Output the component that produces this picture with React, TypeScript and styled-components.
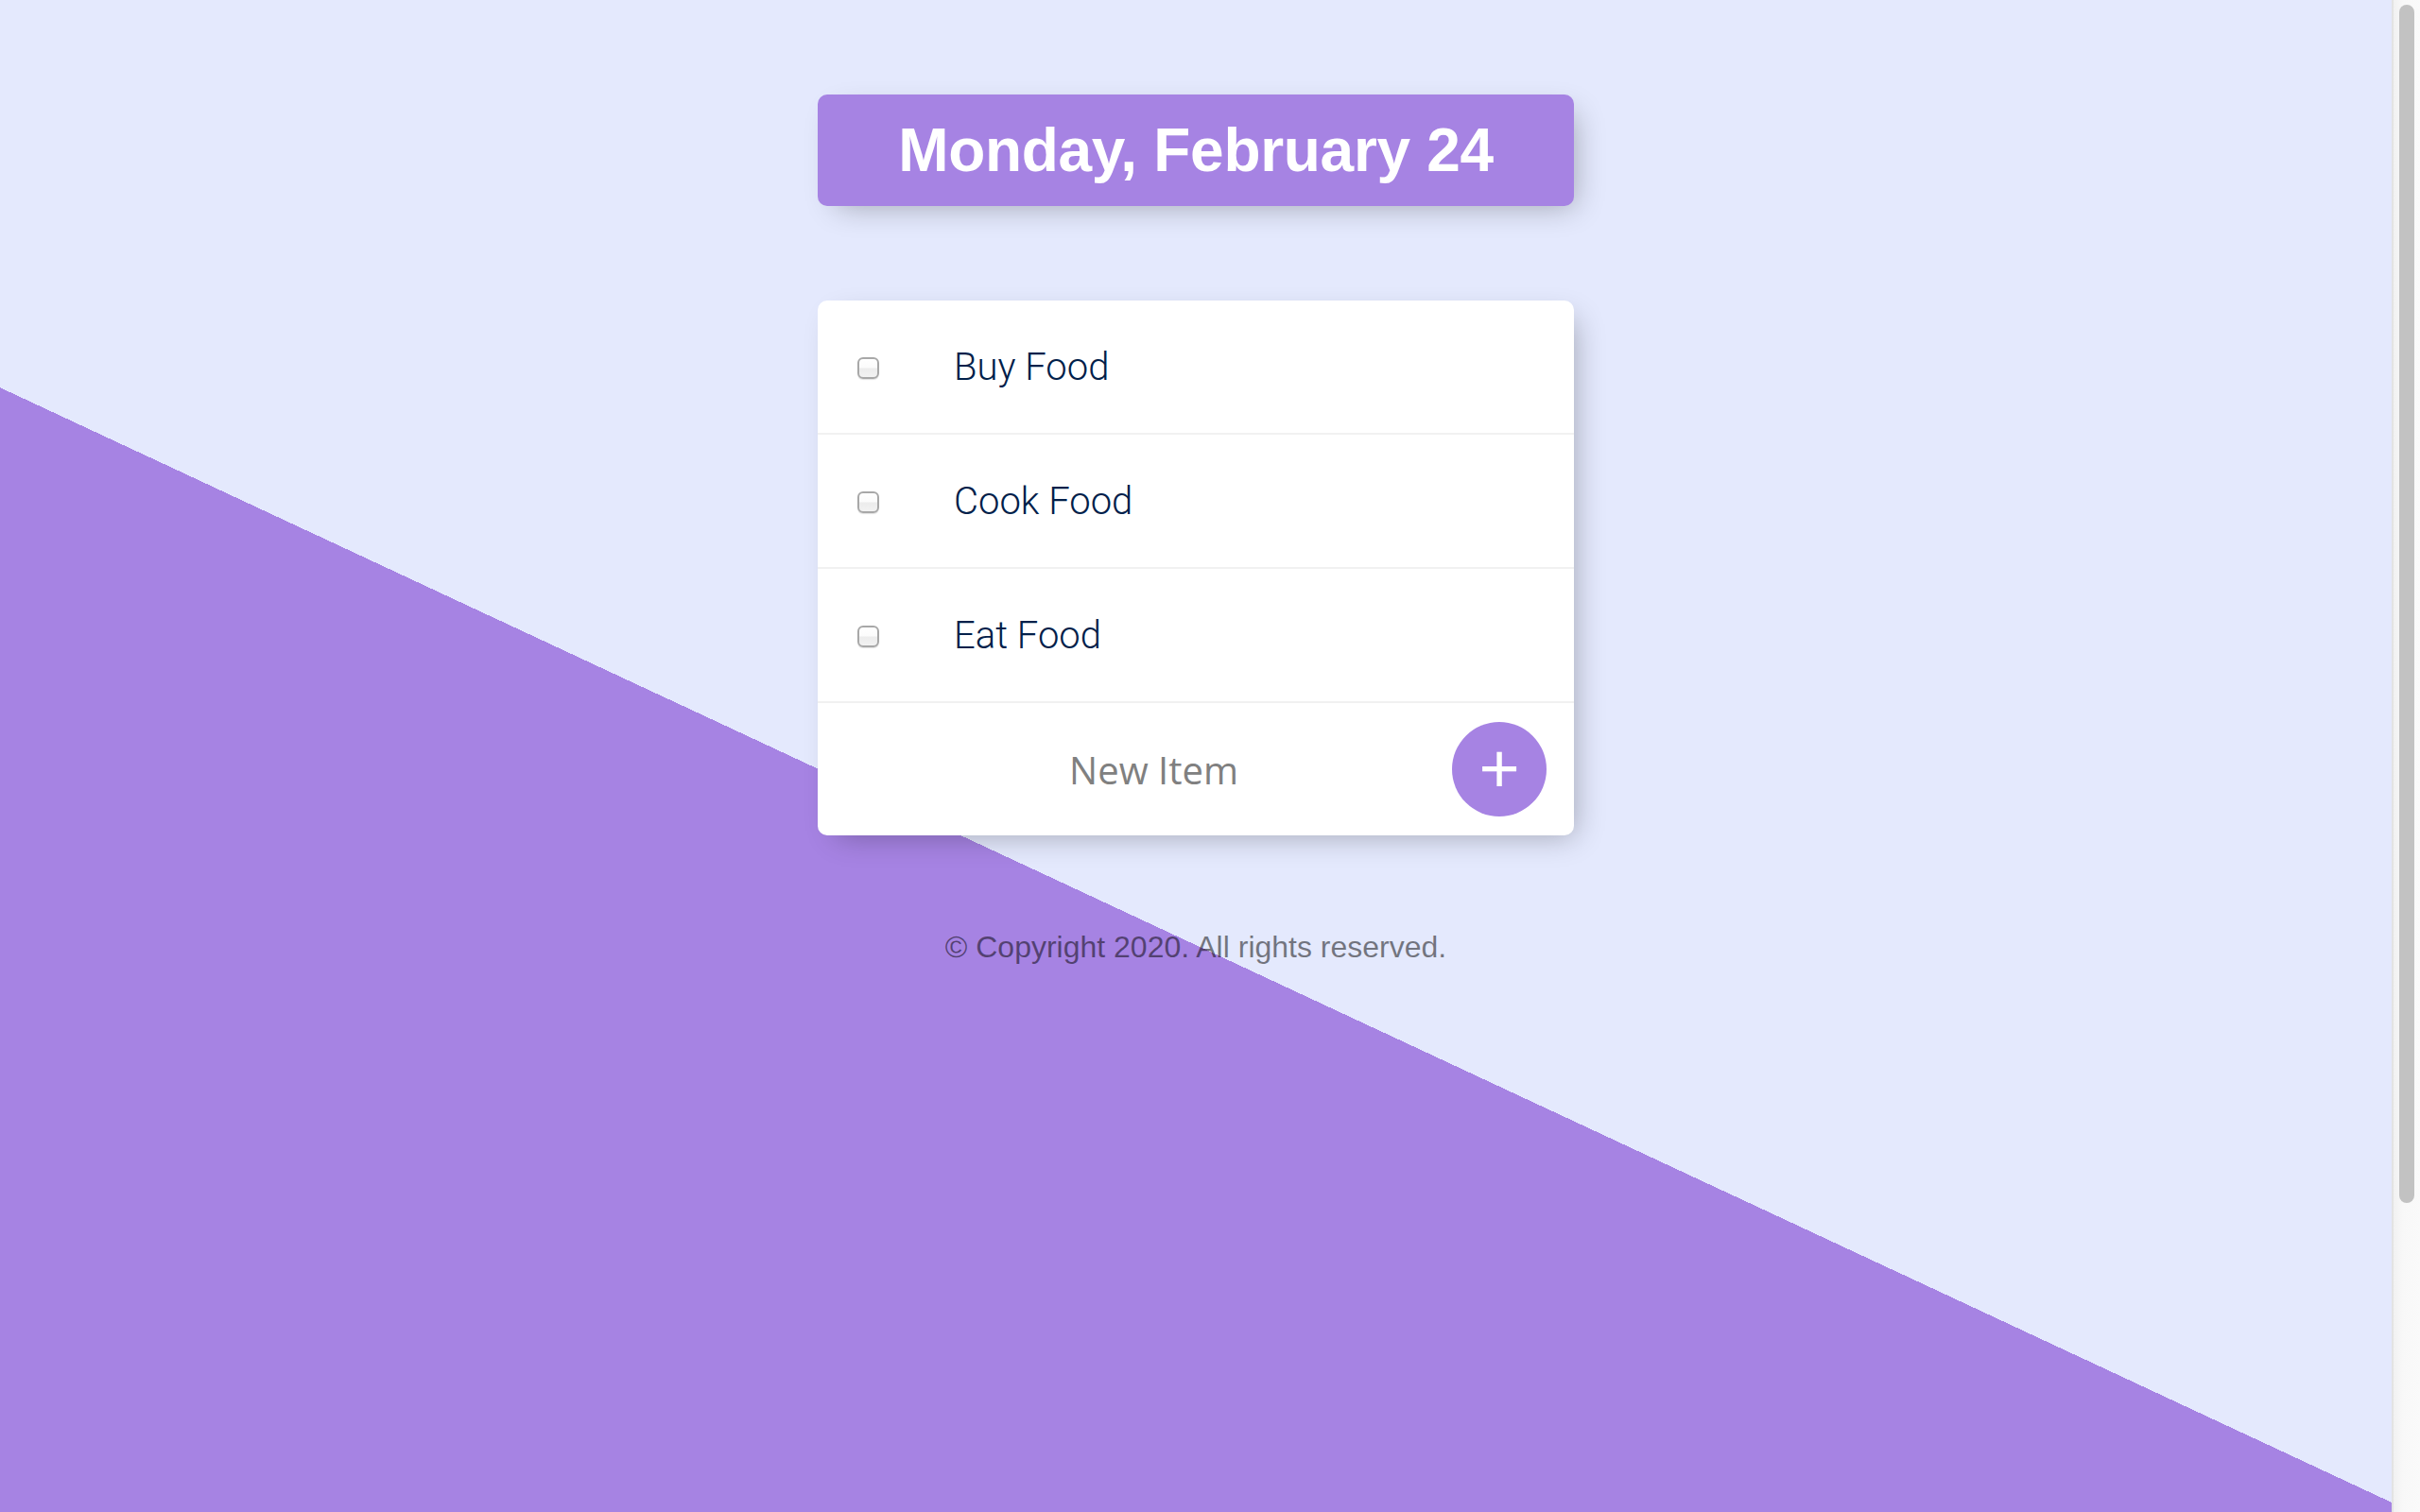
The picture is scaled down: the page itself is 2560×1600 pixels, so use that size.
import React from "react";
import styled, { createGlobalStyle } from "styled-components";

const Global = createGlobalStyle`
  html, body {
    margin: 0;
    padding: 0;
    overflow: hidden;
  }
  body {
    font-family: "Liberation Sans", Arial, sans-serif;
  }
`;

const Viewport = styled.div`
  display: flex;
  width: 2560px;
  height: 1600px;
  overflow: hidden;
`;

const Page = styled.main`
  flex: 1;
  display: flex;
  flex-direction: column;
  align-items: center;
  gap: 100px;
  padding-top: 100px;
  box-sizing: border-box;
  background-color: #e4e9fd;
  background-image: linear-gradient(25deg, #a683e3 50%, #e4e9fd 50%);
  background-size: 100% 2000px;
  background-repeat: no-repeat;
`;

const Box = styled.div<{ $accent?: boolean }>`
  width: 800px;
  border-radius: 10px;
  background: ${(p) => (p.$accent ? "#a683e3" : "#ffffff")};
  box-shadow: 10px 10px 30px -10px rgba(0, 0, 0, 0.3);
  overflow: hidden;
`;

const Heading = styled.h1`
  margin: 0;
  padding: 20px;
  text-align: center;
  color: #ffffff;
  font-family: "Liberation Sans", Arial, sans-serif;
  font-weight: 700;
  font-size: 64px;
  line-height: 78px;
  letter-spacing: -0.3px;
`;

const Item = styled.div`
  min-height: 140px;
  display: flex;
  align-items: center;
  border-bottom: 2px solid #f1f1f1;
  &:last-child {
    border-bottom: 0;
  }
`;

const Check = styled.input`
  appearance: none;
  -webkit-appearance: none;
  width: 23px;
  height: 23px;
  margin: 3px 41px 0 42px;
  box-sizing: border-box;
  border-radius: 6px;
  border: 2px solid #a8a8a8;
  background: linear-gradient(#ffffff 0%, #fbfbfb 48%, #ececec 52%, #f2f2f2 100%);
  box-shadow: 0 1px 1px rgba(0, 0, 0, 0.12);
  flex-shrink: 0;
`;

const Label = styled.p`
  margin: 0;
  padding: 40px 40px 40px 38px;
  font-family: Roboto, "Liberation Sans", sans-serif;
  font-size: 40px;
  font-weight: 300;
  color: #00204a;
`;

const NewForm = styled.form`
  min-height: 140px;
  display: flex;
  align-items: center;
  padding-left: 40px;
`;

const TextInput = styled.input`
  width: 631px;
  height: 120px;
  box-sizing: border-box;
  padding: 0;
  border: none;
  background: transparent;
  text-align: center;
  font-family: "Open Sans", sans-serif;
  font-size: 40px;
  color: #333;
  outline: none;
  &::placeholder {
    color: #808080;
    opacity: 1;
  }
`;

const AddButton = styled.button`
  width: 100px;
  height: 100px;
  border-radius: 50%;
  border: 0;
  padding: 0;
  background-color: #a683e3;
  color: #ffffff;
  font-family: "Liberation Sans", Arial, sans-serif;
  font-size: 74px;
  line-height: 1;
  display: flex;
  align-items: center;
  justify-content: center;
`;

const Footer = styled.footer`
  text-align: center;
  color: rgba(0, 0, 0, 0.5);
  font-family: "Liberation Sans", Arial, sans-serif;
  font-size: 32px;
  line-height: 37px;
`;

const Track = styled.div`
  width: 30px;
  height: 1600px;
  box-sizing: border-box;
  padding: 5px 6px 0 8px;
  background: linear-gradient(to right, #e3e3e3 0, #e3e3e3 2px, #f1f1f1 2px, #f8f8f8 40%, #fafafa 100%);
`;

const Thumb = styled.div`
  width: 16px;
  height: 1268px;
  border-radius: 8px;
  background: #c2c2c2;
`;

const items = ["Buy Food", "Cook Food", "Eat Food"];

export default function App() {
  return (
    <>
      <Global />
      <Viewport>
        <Page>
          <Box $accent>
            <Heading>Monday, February 24</Heading>
          </Box>
          <Box>
            {items.map((t) => (
              <Item key={t}>
                <Check type="checkbox" />
                <Label>{t}</Label>
              </Item>
            ))}
            <NewForm onSubmit={(e) => e.preventDefault()}>
              <TextInput type="text" placeholder="New Item" autoComplete="off" />
              <AddButton type="submit">+</AddButton>
            </NewForm>
          </Box>
          <Footer>© Copyright 2020. All rights reserved.</Footer>
        </Page>
        <Track>
          <Thumb />
        </Track>
      </Viewport>
    </>
  );
}
